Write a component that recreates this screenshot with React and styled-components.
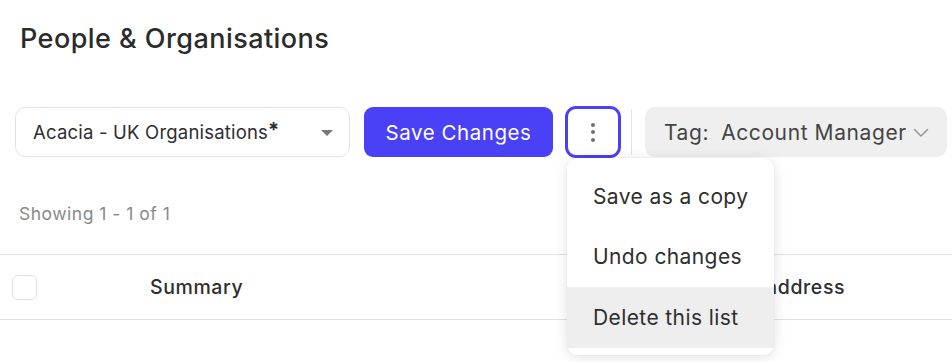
import React from "react";
import styled, { createGlobalStyle } from "styled-components";

const Global = createGlobalStyle`
  html, body { margin: 0; padding: 0; background: #fff; }
  body { font-family: Inter, "Noto Sans", sans-serif; color: #2e2e2e; -webkit-font-smoothing: antialiased; }
`;

const Page = styled.div`
  width: 952px;
  height: 362px;
  overflow: hidden;
  position: relative;
`;

const Title = styled.h1`
  margin: 0;
  padding: 23px 0 0 20px;
  font-size: 27px;
  line-height: 32px;
  font-weight: 500;
  color: #2b2b2b;
  letter-spacing: 0.45px;
`;

const Toolbar = styled.div`
  display: flex;
  align-items: center;
  margin-top: 51px;
  padding-left: 15px;
  height: 52px;
`;

const Select = styled.div`
  box-sizing: border-box;
  width: 335px;
  height: 50px;
  border: 1px solid #e2e2e2;
  border-radius: 10px;
  display: flex;
  align-items: center;
  justify-content: space-between;
  padding: 0 16px 0 17px;
  font-size: 18.5px;
  letter-spacing: 0.2px;
  color: #2e2e2e;
`;

const Star = styled.span`
  font-weight: 700;
  font-size: 20px;
  position: relative;
  top: -2px;
`;

const Caret = styled.span`
  width: 0;
  height: 0;
  border-left: 6px solid transparent;
  border-right: 6px solid transparent;
  border-top: 6px solid #777;
  margin-top: 1px;
`;

const PrimaryButton = styled.button`
  margin-left: 14px;
  height: 50px;
  width: 189px;
  border: none;
  border-radius: 9px;
  background: #4a40f6;
  color: #fff;
  font-family: inherit;
  font-size: 20.5px;
  letter-spacing: 0.55px;
  font-weight: 400;
  padding: 0;
`;

const MenuAnchor = styled.div`
  position: relative;
  margin-left: 12px;
`;

const DotsButton = styled.button`
  box-sizing: border-box;
  width: 56px;
  height: 52px;
  border: 3px solid #4a40f6;
  border-radius: 11px;
  background: #fff;
  display: flex;
  flex-direction: column;
  align-items: center;
  justify-content: center;
  gap: 3.5px;
  padding: 0;
`;

const Dot = styled.span`
  width: 4px;
  height: 4px;
  border-radius: 50%;
  background: #6e6e6e;
`;

const Divider = styled.div`
  width: 1px;
  height: 46px;
  background: #e3e3e3;
  margin: 0 13px 0 10px;
`;

const TagButton = styled.div`
  box-sizing: border-box;
  width: 302px;
  height: 50px;
  border-radius: 10px;
  background: #efefef;
  display: flex;
  align-items: center;
  padding-left: 19px;
  font-size: 21px;
  letter-spacing: 0.6px;
  color: #444;
`;

const TagLabel = styled.span`
  margin-right: 12px;
`;

const Chevron = styled.svg`
  margin-left: 6px;
  margin-top: 1px;
`;

const Showing = styled.div`
  padding: 46px 0 0 19px;
  font-size: 17.5px;
  letter-spacing: 0.5px;
  color: #8a8a8a;
  line-height: 20px;
`;

const HeaderRow = styled.div`
  margin-top: 30px;
  height: 64px;
  border-top: 1px solid #e2e2e2;
  border-bottom: 1px solid #e2e2e2;
  display: flex;
  align-items: center;
  font-size: 19.5px;
  letter-spacing: 0.6px;
  font-weight: 500;
  color: #2e2e2e;
`;

const Checkbox = styled.span`
  box-sizing: border-box;
  width: 25px;
  height: 25px;
  border: 1px solid #e0e0e0;
  border-radius: 6px;
  margin-left: 12px;
`;

const HeaderCell = styled.span`
  margin-left: ${(p) => p.$ml}px;
`;

const Menu = styled.div`
  position: absolute;
  top: 52px;
  left: 2px;
  width: 207px;
  box-sizing: border-box;
  padding: 7px 0;
  background: #fff;
  border-radius: 11px;
  box-shadow: 0 2px 14px rgba(0, 0, 0, 0.12), 0 0 2px rgba(0, 0, 0, 0.05);
  z-index: 10;
`;

const MenuItem = styled.div`
  height: 61px;
  display: flex;
  align-items: center;
  padding-left: 26px;
  padding-top: ${(p) => (p.$first ? 2 : 0)}px;
  box-sizing: border-box;
  font-size: 21px;
  letter-spacing: 0.4px;
  color: #2e2e2e;
  background: ${(p) => (p.$active ? "#eeeeee" : "transparent")};
`;

export default function App() {
  return (
    <Page>
      <Global />
      <Title>People &amp; Organisations</Title>
      <Toolbar>
        <Select>
          <span>
            Acacia - UK Organisations<Star>*</Star>
          </span>
          <Caret />
        </Select>
        <PrimaryButton>Save Changes</PrimaryButton>
        <MenuAnchor>
          <DotsButton>
            <Dot />
            <Dot />
            <Dot />
          </DotsButton>
          <Menu>
            <MenuItem $first>Save as a copy</MenuItem>
            <MenuItem>Undo changes</MenuItem>
            <MenuItem $active>Delete this list</MenuItem>
          </Menu>
        </MenuAnchor>
        <Divider />
        <TagButton>
          <TagLabel>Tag:</TagLabel>
          <span>Account Manager</span>
          <Chevron width="16" height="10" viewBox="0 0 16 10" fill="none">
            <path d="M1.5 1.5 L8 8 L14.5 1.5" stroke="#9a9a9a" strokeWidth="1.6" strokeLinecap="round" strokeLinejoin="round" />
          </Chevron>
        </TagButton>
      </Toolbar>
      <Showing>Showing 1 - 1 of 1</Showing>
      <HeaderRow>
        <Checkbox />
        <HeaderCell $ml={113}>Summary</HeaderCell>
        <HeaderCell $ml={464}>Email address</HeaderCell>
      </HeaderRow>
    </Page>
  );
}
